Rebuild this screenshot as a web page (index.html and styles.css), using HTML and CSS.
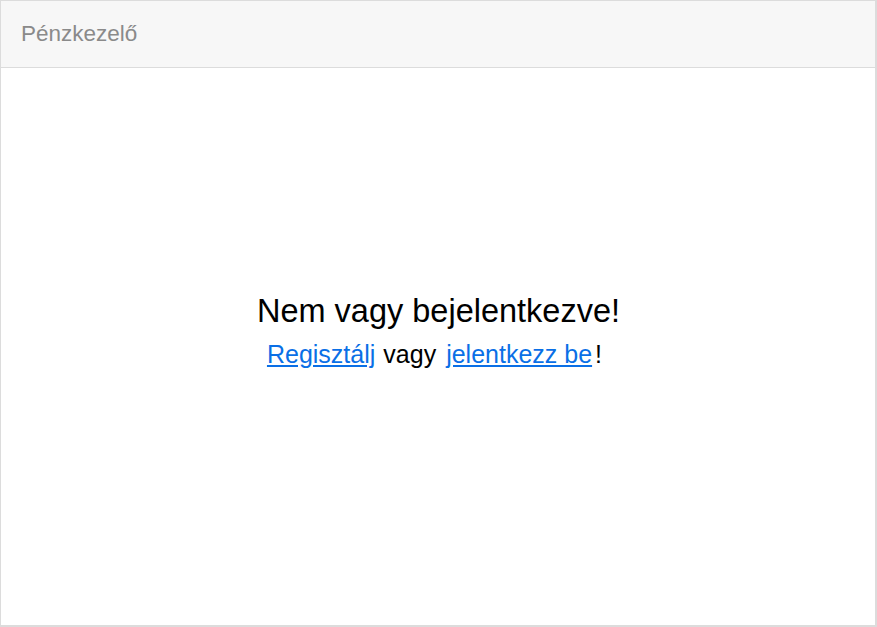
FILE: index.html
```html
<!DOCTYPE html>
<html lang="hu">
<head>
<meta charset="utf-8">
<title>Pénzkezelő</title>
<link rel="stylesheet" href="styles.css">
</head>
<body>
<div class="card">
  <div class="card-header">Pénzkezelő</div>
  <div class="card-body">
    <div class="message">
      <h3 class="title">Nem vagy bejelentkezve!</h3>
      <p class="links"><a href="#">Regisztálj</a><span class="or">vagy</span><a href="#">jelentkezz be</a><span class="bang">!</span></p>
    </div>
  </div>
</div>
</body>
</html>
```

FILE: styles.css
```css
html, body {
  margin: 0;
  padding: 0;
  height: 100%;
  background: #fff;
}
body {
  font-family: "Liberation Sans", Arial, sans-serif;
  color: #000;
}
.card {
  box-sizing: border-box;
  width: 877px;
  height: 627px;
  border: 1px solid #dcdcdc;
  border-right-width: 2px;
  border-bottom-width: 2px;
  display: flex;
  flex-direction: column;
}
.card-header {
  background: #f7f7f7;
  border-bottom: 1px solid #dcdcdc;
  color: #8a8a8a;
  font-size: 22.5px;
  line-height: 26px;
  padding: 20px 20px 20px;
}
.card-body {
  flex: 1;
  display: flex;
  align-items: center;
  justify-content: center;
}
.message {
  text-align: center;
  margin-bottom: 33px;
  padding-left: 1px;
}
.title {
  margin: 0;
  font-weight: normal;
  font-size: 32.5px;
  line-height: 38px;
}
.links {
  margin: 9px 0 0;
  padding-right: 8px;
  font-size: 25px;
  line-height: 30px;
}
.links a {
  color: #0a6fe6;
  text-decoration: underline;
}
.or {
  margin: 0 10px 0 8px;
}
.bang {
  margin-left: 3px;
}
```
